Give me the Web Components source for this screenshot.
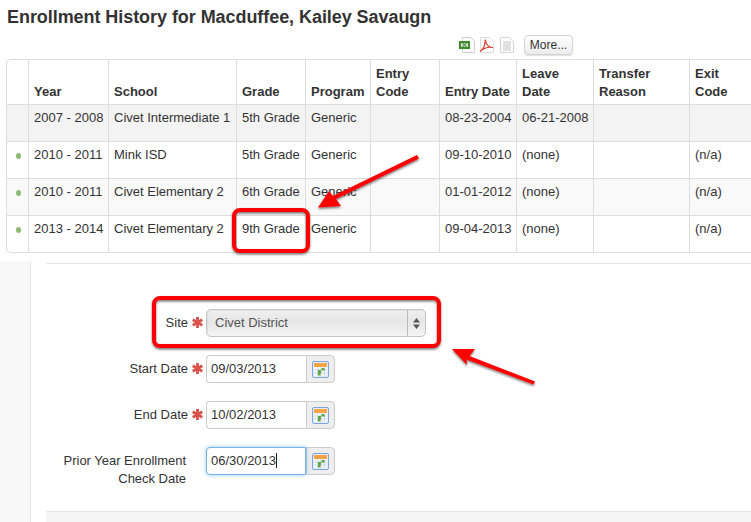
<!doctype html>
<html>
<head>
<meta charset="utf-8">
<title>Enrollment History</title>
<style>
  html, body { margin: 0; padding: 0; background: #fff; overflow: hidden; }
  body {
    width: 751px;
    height: 522px;
    position: relative;
    font: 13px/18px "Liberation Sans", Arial, sans-serif;
    color: #333;
  }
</style>
</head>
<body>
<page-heading>Enrollment History for Macduffee, Kailey Savaugn</page-heading>
<export-bar></export-bar>
<history-table></history-table>
<enroll-form>
  <form-field label="Site" required><site-select value="Civet District"></site-select></form-field>
  <form-field label="Start Date" required><date-input value="09/03/2013"></date-input></form-field>
  <form-field label="End Date" required><date-input value="10/02/2013"></date-input></form-field>
  <form-field label="Prior Year Enrollment Check Date"><date-input value="06/30/2013" focused></date-input></form-field>
</enroll-form>
<call-outs></call-outs>

<script>
const calendarIcon = `
  <svg width="17" height="17" viewBox="0 0 17 17">
    <rect x=".5" y=".5" width="16" height="16" rx="1.5" fill="#e4eefa" stroke="#7fa6dc"/>
    <rect x="2" y="2" width="13" height="4" fill="#f6a345"/>
    <rect x="2" y="6" width="13" height="9" fill="#f4f7fb"/>
    <path d="M2 9h13M2 12h13M5.500 6v9M9 6v9M12.500 6v9" stroke="#c3cfdd" stroke-width=".7"/>
    <rect x="6" y="9" width="3" height="3" fill="#5aa83e"/>
    <rect x="9.500" y="7" width="3" height="2.500" fill="#5aa83e"/>
    <rect x="6" y="12" width="2.500" height="2.500" fill="#5aa83e"/>
  </svg>`;

class PageHeading extends HTMLElement {
  constructor() {
    super();
    this.attachShadow({mode: 'open'}).innerHTML = `
      <style>
        :host { display: block; padding: 6px 0 0 7px; height: 23px; }
        h1 { margin: 0; font: bold 18px/22px "Liberation Sans", Arial, sans-serif; letter-spacing: -.06px; color: #333; }
      </style>
      <h1><slot></slot></h1>`;
  }
}

class ExportBar extends HTMLElement {
  constructor() {
    super();
    this.attachShadow({mode: 'open'}).innerHTML = `
      <style>
        :host { display: flex; align-items: center; height: 30px; padding: 1px 0 0 459px; box-sizing: border-box; }
        svg { display: block; }
        button {
          margin-left: 10px;
          width: 49px;
          height: 20px;
          padding: 0;
          border: 1px solid #d2d2d2;
          border-radius: 4px;
          background: linear-gradient(#fff, #ececec);
          box-shadow: 0 1px 1px rgba(0,0,0,.12);
          font: 12px "Liberation Sans", Arial, sans-serif;
          color: #333;
        }
      </style>
      <svg width="16" height="16" viewBox="0 0 16 16" style="margin-right:4px">
        <path d="M3.500.5h8l4 4v11h-12z" fill="#fff" stroke="#d0d0d0"/>
        <rect x="0" y="4" width="11" height="8" fill="#3f8a2e"/>
        <rect x="2" y="6" width="7" height="4" fill="#cfe5c4"/>
        <path d="M3.500 6l4 4M7.500 6l-4 4" stroke="#2c6b20"/>
      </svg>
      <svg width="16" height="16" viewBox="0 0 16 16" style="margin-right:5px">
        <path d="M1.500.5h9l4 4v11h-13z" fill="#fff" stroke="#dcdcdc"/>
        <path d="M1 14.500C4 13 6.500 8 6.200 2.500 7 7 9.500 10.500 14 10.500 10 9.800 5 11 1 14.500z" fill="none" stroke="#d8382c" stroke-width="1.200"/>
      </svg>
      <svg width="14" height="16" viewBox="0 0 14 16">
        <path d="M.5.500h9l4 4v11H.5z" fill="#fff" stroke="#d4d4d4"/>
        <path d="M3 5h8M3 7h8M3 9h8M3 11h8M3 13h8" stroke="#c4c4c4"/>
      </svg>
      <button>More...</button>`;
  }
}

const HISTORY_HEAD = ['', 'Year', 'School', 'Grade', 'Program', 'Entry<br>Code', 'Entry Date', 'Leave<br>Date', 'Transfer<br>Reason', 'Exit<br>Code'];
const HISTORY_ROWS = [
  [false, '2007 - 2008', 'Civet Intermediate 1', '5th Grade', 'Generic', '', '08-23-2004', '06-21-2008', '', ''],
  [true, '2010 - 2011', 'Mink ISD', '5th Grade', 'Generic', '', '09-10-2010', '(none)', '', '(n/a)'],
  [true, '2010 - 2011', 'Civet Elementary 2', '6th Grade', 'Generic', '', '01-01-2012', '(none)', '', '(n/a)'],
  [true, '2013 - 2014', 'Civet Elementary 2', '9th Grade', 'Generic', '', '09-04-2013', '(none)', '', '(n/a)'],
];

class HistoryTable extends HTMLElement {
  constructor() {
    super();
    const widths = [21, 80, 128, 69, 65, 69, 77, 77, 96, 72];
    const cols = widths.map(w => `<col style="width:${w}px">`).join('');
    const head = HISTORY_HEAD.map(t => `<th>${t}</th>`).join('');
    const rows = HISTORY_ROWS.map(r => '<tr>' + r.map((c, i) =>
      i === 0 ? `<td class="dot">${c ? '<i></i>' : ''}</td>` : `<td>${c}</td>`).join('') + '</tr>').join('');
    this.attachShadow({mode: 'open'}).innerHTML = `
      <style>
        :host { display: block; margin-left: 6px; width: 755px; }
        table {
          table-layout: fixed;
          width: 755px;
          border-collapse: separate;
          border-spacing: 0;
          border: 1px solid #ddd;
          border-right: 0;
          border-radius: 5px 0 0 5px;
        }
        th, td { border-left: 1px solid #ddd; border-top: 1px solid #ddd; padding: 4px 5px; overflow: hidden; white-space: nowrap; }
        th:first-child, td:first-child { border-left: 0; }
        th {
          border-top: 0;
          height: 36px;
          padding: 5px 5px 3px;
          vertical-align: bottom;
          text-align: left;
          font-weight: bold;
          line-height: 18px;
          color: #333;
        }
        td { height: 28px; vertical-align: top; padding-top: 4px; padding-bottom: 4px; }
        tbody tr:nth-child(1) { background: #f3f3f3; }
        tbody tr:nth-child(3) { background: #f9f9f9; }
        .dot { padding: 0; }
        .dot i {
          display: block;
          width: 5px;
          height: 6px;
          margin: 11px 0 0 9px;
          border-radius: 50%;
          background: #8dbb76;
        }
      </style>
      <table><colgroup>${cols}</colgroup>
        <thead><tr>${head}</tr></thead>
        <tbody>${rows}</tbody>
      </table>`;
  }
}

class EnrollForm extends HTMLElement {
  constructor() {
    super();
    this.attachShadow({mode: 'open'}).innerHTML = `
      <style>
        :host { display: block; margin-top: 8px; height: 261px; }
        .shell { display: flex; height: 261px; }
        .strip { width: 30px; background: #f8f8f8; border-right: 1px solid #e6e6e6; }
        .main { flex: 1; margin-left: 15px; padding-top: 2px; display: flex; flex-direction: column; }
        .fields { flex: 1; border-top: 1px solid #e6e6e6; padding-top: 45px; display: flex; flex-direction: column; gap: 18px; }
        .foot { height: 10px; background: #f5f5f5; border-top: 1px solid #e6e6e6; }
      </style>
      <div class="shell">
        <div class="strip"></div>
        <div class="main">
          <div class="fields"><slot></slot></div>
          <div class="foot"></div>
        </div>
      </div>`;
  }
}

class FormField extends HTMLElement {
  constructor() {
    super();
    const req = this.hasAttribute('required');
    const star = req ? `
      <svg width="11" height="11" viewBox="0 0 11 11"><path d="M5.500 0v11M.7 2.700l9.600 5.600M.7 8.300l9.600-5.600" stroke="#d9534a" stroke-width="2.800"/></svg>` : '';
    this.attachShadow({mode: 'open'}).innerHTML = `
      <style>
        :host { display: grid; grid-template-columns: 160px auto; align-items: start; }
        label {
          display: flex;
          justify-content: flex-end;
          align-items: center;
          gap: 4px;
          padding-right: 3px;
          min-height: 28px;
          text-align: right;
          line-height: 18px;
          color: #333;
        }
        label.plain { padding: 5px 20px 0 0; min-height: 0; letter-spacing: -.02px; }
        svg { flex: none; margin-top: -2px; }
      </style>
      <label class="${req ? '' : 'plain'}"><span>${this.getAttribute('label')}</span>${star}</label>
      <div><slot></slot></div>`;
  }
}

class SiteSelect extends HTMLElement {
  constructor() {
    super();
    this.attachShadow({mode: 'open'}).innerHTML = `
      <style>
        :host {
          display: flex;
          width: 220px;
          height: 28px;
          box-sizing: border-box;
          border: 1px solid #c4c4c4;
          border-radius: 5px;
          background: linear-gradient(#f0f0f0, #e6e6e6 45%, #f4f4f4);
          box-shadow: inset 1px 1px 1px rgba(0,0,0,.06);
          color: #555;
        }
        .text { flex: 1; padding: 4px 0 0 8px; line-height: 18px; }
        .arrows { width: 17px; border-left: 1px solid #bbb; display: flex; align-items: center; justify-content: center; }
      </style>
      <div class="text">${this.getAttribute('value')}</div>
      <div class="arrows">
        <svg width="7" height="11" viewBox="0 0 7 11"><path d="M3.500 0L7 4.500H0zM3.500 11L0 6.500h7z" fill="#555"/></svg>
      </div>`;
  }
}

class DateInput extends HTMLElement {
  constructor() {
    super();
    const focused = this.hasAttribute('focused');
    this.attachShadow({mode: 'open'}).innerHTML = `
      <style>
        :host { display: flex; width: 129px; height: 28px; }
        .field {
          width: 100px;
          box-sizing: border-box;
          padding: 4px 0 0 4px;
          border: 1px solid #ccc;
          border-right: 0;
          border-radius: 4px 0 0 4px;
          line-height: 18px;
          color: #333;
          background: #fff;
          white-space: nowrap;
        }
        .field.on {
          border: 1px solid #73b4ee;
          box-shadow: 0 0 4px rgba(82,168,236,.6);
          position: relative;
        }
        .caret { display: inline-block; width: 1px; height: 15px; background: #222; vertical-align: -3px; }
        .addon {
          flex: 1;
          display: flex;
          align-items: center;
          justify-content: center;
          background: #eee;
          border: 1px solid #ccc;
          border-radius: 0 4px 4px 0;
        }
        svg { display: block; }
      </style>
      <div class="field ${focused ? 'on' : ''}">${this.getAttribute('value')}${focused ? '<span class="caret"></span>' : ''}</div>
      <div class="addon">${calendarIcon}</div>`;
  }
}

// red screenshot annotations drawn on top of the page
class CallOuts extends HTMLElement {
  constructor() {
    super();
    this.attachShadow({mode: 'open'}).innerHTML = `
      <style>
        :host { position: absolute; left: 0; top: 0; width: 751px; height: 522px; pointer-events: none; }
        svg { display: block; }
      </style>
      <svg width="751" height="522" viewBox="0 0 751 522">
        <defs>
          <filter id="sh" x="-10%" y="-10%" width="120%" height="130%">
            <feDropShadow dx="0" dy="1.500" stdDeviation="1.200" flood-color="#000" flood-opacity=".55"/>
          </filter>
        </defs>
        <g filter="url(#sh)" fill="none" stroke="#f00" stroke-width="4">
          <rect x="234" y="210" width="74" height="41" rx="6"/>
          <rect x="154" y="298" width="285" height="48" rx="6"/>
        </g>
        <g filter="url(#sh)" fill="#f00">
          <path d="M417 155L419 158.500 336 199 341 206 318 207.500 329 191 333 196z"/>
          <path d="M452 349L475 349 469.500 356 535 381.500 533.500 384.500 466.500 359.500 467 365z"/>
        </g>
      </svg>`;
  }
}

customElements.define('page-heading', PageHeading);
customElements.define('export-bar', ExportBar);
customElements.define('history-table', HistoryTable);
customElements.define('enroll-form', EnrollForm);
customElements.define('form-field', FormField);
customElements.define('site-select', SiteSelect);
customElements.define('date-input', DateInput);
customElements.define('call-outs', CallOuts);
</script>
</body>
</html>
